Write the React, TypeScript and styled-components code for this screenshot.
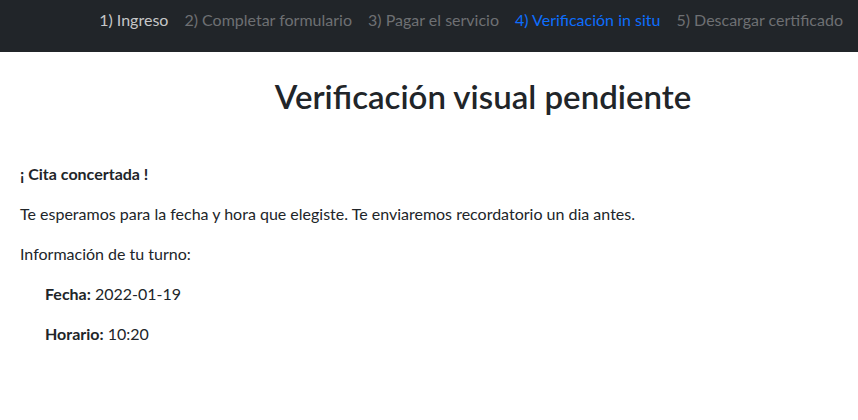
import React from "react";
import styled, { createGlobalStyle } from "styled-components";

const GlobalStyle = createGlobalStyle`
  body {
    margin: 0;
    font-family: Lato, "Noto Sans", sans-serif;
    font-size: 16px;
    line-height: 1.5;
    color: #212529;
    background: #fff;
  }
`;

const Navbar = styled.nav`
  height: 52px;
  background: #212529;
  display: flex;
  justify-content: flex-end;
  align-items: flex-start;
  padding: 8px 7px 0 0;
  box-sizing: border-box;
`;

const NavLink = styled.span<{ $state?: "done" | "active" | "todo" }>`
  padding: 0 8px;
  line-height: 24px;
  color: ${(p) => (p.$state === "active" ? "#0d6efd" : p.$state === "done" ? "#c6c7c8" : "#6e7073")};
  white-space: nowrap;
`;

const Main = styled.main`
  padding: 0 20px;
`;

const Title = styled.h1`
  margin: 25px 0 45px 108px;
  text-align: center;
  font-size: 33px;
  font-weight: 600;
  line-height: 1.2;
`;

const Para = styled.p<{ $indent?: boolean }>`
  margin: 0 0 16px ${(p) => (p.$indent ? "25px" : "0")};
`;

const steps: { label: string; state: "done" | "active" | "todo" }[] = [
  { label: "1) Ingreso", state: "done" },
  { label: "2) Completar formulario", state: "todo" },
  { label: "3) Pagar el servicio", state: "todo" },
  { label: "4) Verificación in situ", state: "active" },
  { label: "5) Descargar certificado", state: "todo" },
];

const App = () => (
  <>
    <GlobalStyle />
    <Navbar>
      {steps.map((s) => (
        <NavLink key={s.label} $state={s.state}>
          {s.label}
        </NavLink>
      ))}
    </Navbar>
    <Main>
      <Title>Verificación visual pendiente</Title>
      <Para>
        <b>¡ Cita concertada !</b>
      </Para>
      <Para>Te esperamos para la fecha y hora que elegiste. Te enviaremos recordatorio un dia antes.</Para>
      <Para>Información de tu turno:</Para>
      <Para $indent>
        <b>Fecha:</b> 2022-01-19
      </Para>
      <Para $indent>
        <b>Horario:</b> 10:20
      </Para>
    </Main>
  </>
);

export default App;
